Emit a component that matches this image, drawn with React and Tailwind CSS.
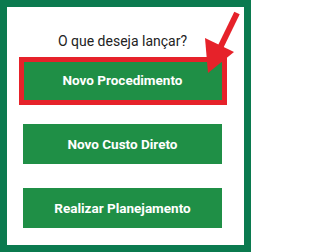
export default function App() {
  return (
    <div
      className="relative w-[251px] h-[252px] border-[7px] border-[#0b7a4f] bg-white"
      style={{ fontFamily: "Roboto, 'Liberation Sans', sans-serif" }}
    >
      <div className="flex flex-col pt-[24px] pl-[16px]">
        <p className="w-[199px] text-center text-[14px] leading-[20px] text-[#222]">
          O que deseja lançar?
        </p>
        <div className="mt-[9px] flex flex-col gap-[24px]">
          <button className="w-[199px] h-[40px] bg-[#1f8f46] text-white font-bold text-[13.5px]">
            Novo Procedimento
          </button>
          <button className="w-[199px] h-[40px] bg-[#1f8f46] text-white font-bold text-[13.5px]">
            Novo Custo Direto
          </button>
          <button className="w-[199px] h-[40px] bg-[#1f8f46] text-white font-bold text-[13.5px]">
            Realizar Planejamento
          </button>
        </div>
      </div>

      {/* destaque vermelho */}
      <div className="absolute left-[12px] top-[50px] w-[208px] h-[48px] border-[5px] border-[#e6222a]" />
      <svg
        className="absolute -left-[7px] -top-[7px]"
        width="251"
        height="252"
        viewBox="0 0 251 252"
      >
        <line x1="237" y1="13" x2="220" y2="48" stroke="#e6222a" strokeWidth="6" />
        <polygon points="205,38 234,52 208,73" fill="#e6222a" />
      </svg>
    </div>
  );
}
